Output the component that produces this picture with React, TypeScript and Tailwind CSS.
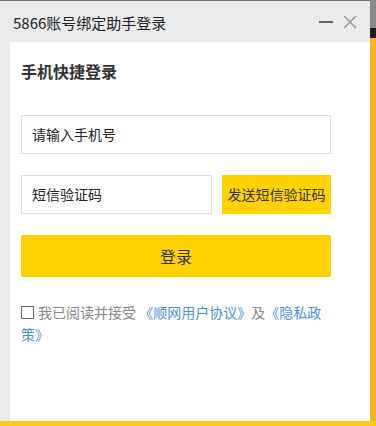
import React from 'react';

const font = { fontFamily: '"Noto Sans CJK SC", "Liberation Sans", sans-serif' };

export default function App() {
  return (
    <div className="w-[376px] h-[426px] overflow-hidden bg-[#f6b127] flex flex-col" style={font}>
      <div className="flex flex-1 min-h-0">
        {/* Login window */}
        <div className="w-[370px] flex flex-col">
          <div className="h-px bg-[#6e6e6e]" />
          {/* Title bar */}
          <div className="h-[41px] bg-[#e9eaec] flex items-center pl-[13px] pr-[13px]">
            <span className="text-[15px] text-[#222] leading-none mt-[1px]">5866账号绑定助手登录</span>
            <div className="ml-auto flex items-center gap-[10px]">
              <svg width="14" height="14" viewBox="0 0 14 14">
                <rect x="0" y="6" width="14" height="2" fill="#666" />
              </svg>
              <svg width="14" height="14" viewBox="0 0 14 14">
                <path d="M1 1 L13 13 M13 1 L1 13" stroke="#999" strokeWidth="1.6" />
              </svg>
            </div>
          </div>
          {/* Body */}
          <div className="flex flex-1 min-h-0 bg-[#e9eaec]">
            <div className="w-[10px]" />
            <div className="flex-1 bg-white pl-[11px] pr-[39px] pt-[18px]">
              <h2 className="text-[16px] font-bold text-[#333] leading-[22px]">手机快捷登录</h2>

              <div className="mt-[33px] h-[39px] border border-[#dcdcdc] flex items-center px-[10px]">
                <span className="text-[14px] text-[#222]">请输入手机号</span>
              </div>

              <div className="mt-[21px] flex gap-[10px]">
                <div className="w-[191px] h-[39px] border border-[#dcdcdc] flex items-center px-[10px]">
                  <span className="text-[14px] text-[#222]">短信验证码</span>
                </div>
                <button className="flex-1 h-[39px] bg-[#ffd200] text-[14px] text-[#333] flex items-center justify-center whitespace-nowrap">
                  发送短信验证码
                </button>
              </div>

              <button className="mt-[21px] w-full h-[42px] rounded-[2px] bg-[#ffd200] text-[16px] text-[#333] flex items-center justify-center">
                登录
              </button>

              {/* Agreement */}
              <div className="mt-[24px] text-[14px] leading-[22px] text-[#888]">
                <div className="flex items-center whitespace-nowrap">
                  <span className="inline-block w-[13px] h-[13px] border border-[#666] mr-[4px]" />
                  <span>我已阅读并接受&nbsp;</span>
                  <span className="text-[#4a90e2]">《顺网用户协议》</span>
                  <span>及</span>
                  <span className="text-[#4a90e2]">《隐私政</span>
                </div>
                <div className="text-[#4a90e2]">策》</div>
              </div>
            </div>
          </div>
        </div>
        {/* Background app peeking */}
        <div className="flex-1 flex flex-col">
          <div className="h-[28px] bg-[#8a8a8a]" />
          <div className="h-[10px] bg-[#1c1c1c]" />
          <div className="flex-1 bg-[#f6b127]" />
        </div>
      </div>
      <div className="h-[5px] bg-[#fcc918]" />
    </div>
  );
}
